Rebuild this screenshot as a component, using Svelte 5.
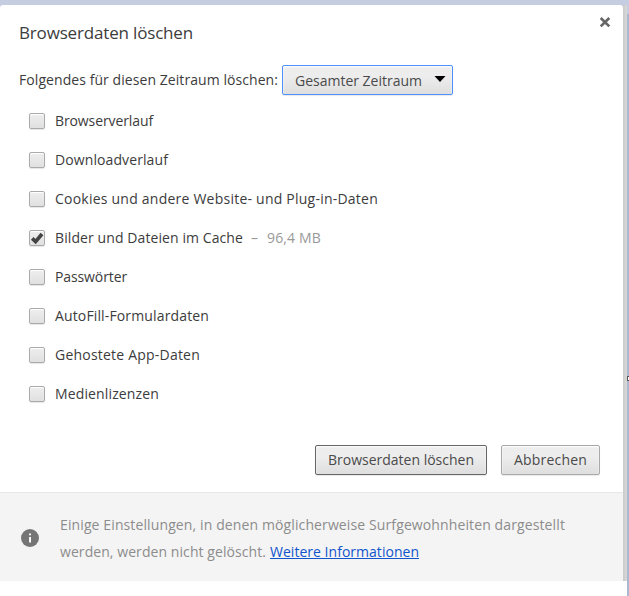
<script>
  const items = [
    { label: 'Browserverlauf', width: 98 },
    { label: 'Downloadverlauf', width: 113 },
    { label: 'Cookies und andere Website- und Plug-in-Daten', width: 323 },
    { label: 'Bilder und Dateien im Cache', width: 188, checked: true, size: '96,4 MB' },
    { label: 'Passwörter', width: 72 },
    { label: 'AutoFill-Formulardaten', width: 154 },
    { label: 'Gehostete App-Daten', width: 145 },
    { label: 'Medienlizenzen', width: 104 }
  ];

  // Spreads the letters so a label fills its intended measure.
  function fit(node, width) {
    const range = document.createRange();
    range.selectNodeContents(node);
    const natural = range.getBoundingClientRect().width;
    node.style.letterSpacing = `${(width - natural) / node.textContent.length}px`;
  }
</script>

<div class="window">
  <div class="dialog">
    <button class="close" aria-label="Schließen">
      <svg width="12" height="12" viewBox="0 0 12 12"><path d="M1.7 2 10.3 10.4M10.3 2 1.7 10.4" stroke="#666" stroke-width="2.7" stroke-linecap="butt" /></svg>
    </button>
    <h1><span use:fit={174}>Browserdaten löschen</span></h1>
    <div class="period">
      <span use:fit={259}>Folgendes für diesen Zeitraum löschen:</span>
      <button class="select">
        <span use:fit={127}>Gesamter Zeitraum</span>
        <svg width="12" height="8" viewBox="0 0 12 8"><path d="M.5 1h11L6 7z" fill="#000" /></svg>
      </button>
    </div>
    <div class="list">
      {#each items as item}
        <div class="row">
          <span class="box">
            {#if item.checked}
              <svg width="14" height="14" viewBox="0 0 14 14"><path d="M2.2 7.4 5.6 10.6 12 3" fill="none" stroke="#444" stroke-width="3.7" /></svg>
            {/if}
          </span>
          <span use:fit={item.width}>{item.label}</span>
          {#if item.size}
            <span class="size"><span class="dash">–</span><span use:fit={54}>{item.size}</span></span>
          {/if}
        </div>
      {/each}
    </div>
    <div class="actions">
      <button class="primary"><span use:fit={146}>Browserdaten löschen</span></button>
      <button class="cancel"><span use:fit={73}>Abbrechen</span></button>
    </div>
    <footer>
      <svg class="info" width="18" height="18" viewBox="0 0 18 18"><circle cx="9" cy="9" r="9" fill="#757575" /><path d="M8.1 4.4h1.9v1.9H8.1zM8.1 8h1.9v5.6H8.1z" fill="#fff" /></svg>
      <div class="note">
        <div><span use:fit={505}>Einige Einstellungen, in denen möglicherweise Surfgewohnheiten dargestellt</span></div>
        <div class="second"><span use:fit={206}>werden, werden nicht gelöscht.</span><a href="#info"><span use:fit={149}>Weitere Informationen</span></a></div>
      </div>
    </footer>
  </div>
  <div class="shade"></div>
  <div class="edge"><i></i></div>
</div>

<style>
  :global(body) { background: #fff; overflow: hidden; }
  .window {
    box-sizing: border-box; width: 629px; height: 596px; padding-top: 5px;
    background: linear-gradient(#c5cee0 0 14px, #fff 14px);
    display: flex; color: #3c3c3c;
    font: 14px/20px "Open Sans", "Noto Sans", sans-serif; white-space: nowrap;
  }
  .dialog { width: 623px; height: 591px; background: #fff; border-radius: 3px 3px 0 0; position: relative; display: flex; flex-direction: column; }
  .shade { width: 4px; height: 576px; background: linear-gradient(90deg, #cacaca, #d9d9d9); }
  .edge { width: 2px; height: 591px; background: linear-gradient(#c5cee0 0 9px, #acb8d0 9px); position: relative; }
  .edge i { position: absolute; top: 371px; left: 0; width: 5px; height: 5px; box-sizing: border-box; border: 1px solid #555; background: #fff; }
  button { font: inherit; color: #4a4a4a; padding: 0; margin: 0; box-sizing: border-box; }
  .close { position: absolute; right: 12px; top: 11px; width: 12px; height: 12px; border: 0; background: none; }
  svg { display: block; flex: none; }
  h1 { margin: 15px 0 0 19px; font-size: 17px; line-height: 25px; font-weight: 400; }
  .period { display: flex; align-items: center; margin: 20px 0 0 19px; height: 30px; gap: 4px; }
  .select, .actions button {
    height: 30px; border: 1px solid #a9a9a9; border-radius: 2px;
    background: linear-gradient(#ededed 38%, #dedede); box-shadow: 0 1px 1px rgba(0,0,0,.09), inset 0 1px 2px #fff;
  }
  .select { width: 171px; border-color: #4d90fe; display: flex; align-items: center; justify-content: space-between; padding: 1px 6px 0 12px; }
  .select svg { margin-top: -3px; }
  .list { margin: 6px 0 0 29px; }
  .row { height: 39px; display: flex; align-items: center; }
  .row > span:nth-child(2) { margin-left: 10px; }
  .box { width: 16px; height: 16px; box-sizing: border-box; border: 1px solid #aaa; border-radius: 2px; background: linear-gradient(#eee, #e0e0e0); box-shadow: 0 1px 1px rgba(0,0,0,.1), inset 0 1px 1px #fff; flex: none; }
  .size { display: flex; color: #999; margin-left: 8px; }
  .dash { width: 16px; }
  .actions { display: flex; justify-content: flex-end; gap: 14px; margin: 32px 23px 0 0; }
  .actions .primary { width: 172px; border-color: #666; }
  .actions .cancel { width: 99px; }
  footer { box-sizing: border-box; height: 89px; margin-top: 17px; border-top: 1px solid #e7e7e7; background: #f4f4f4; display: flex; align-items: center; padding-left: 21px; color: #8c8c8c; line-height: 27px; }
  .info { margin-top: 2px; }
  .note { margin: 2px 0 0 21px; }
  .second { display: flex; gap: 4px; }
  a { color: #15c; text-decoration: underline; text-underline-offset: 1px; text-decoration-thickness: 1px; }
</style>
